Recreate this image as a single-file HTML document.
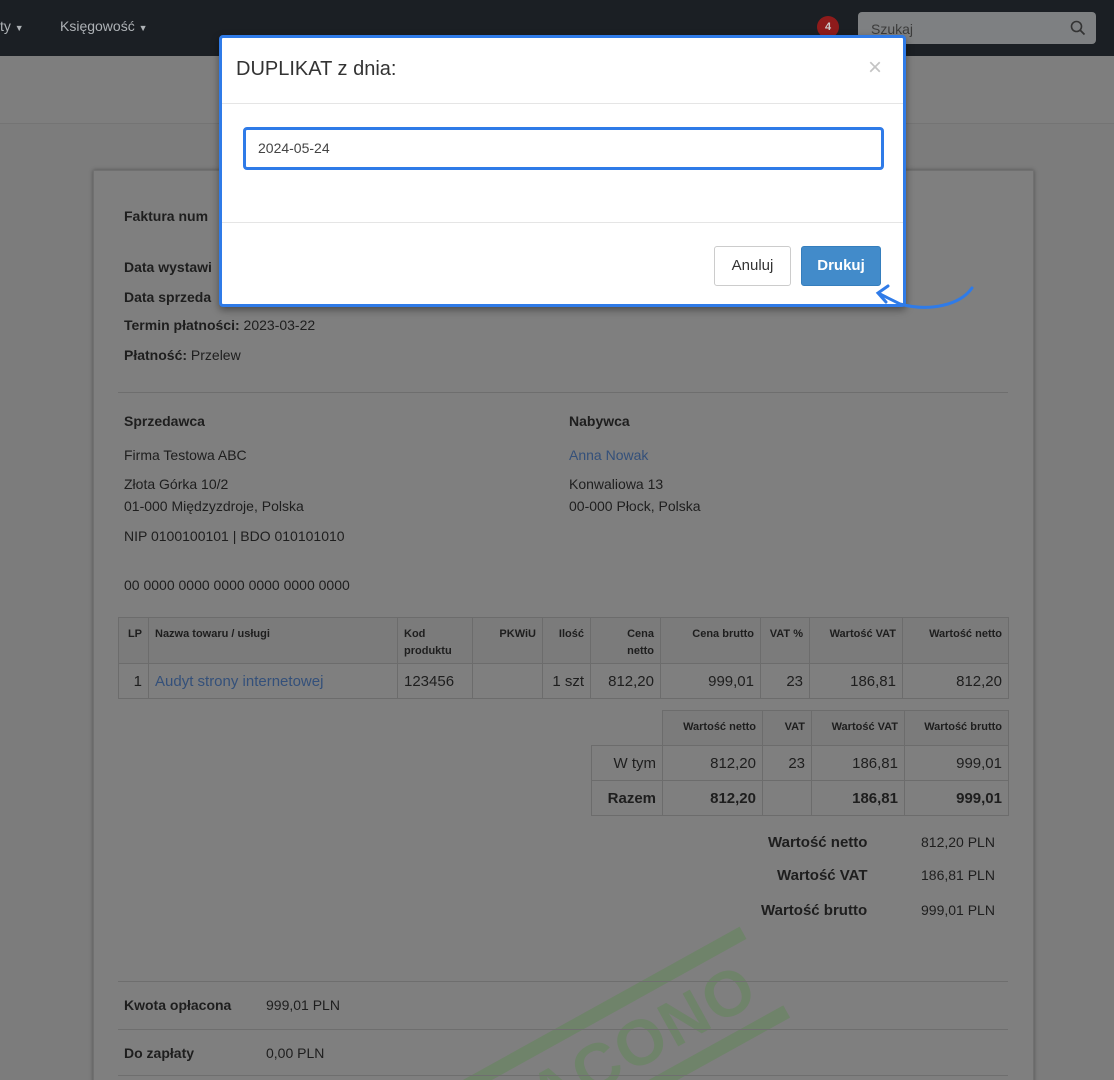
<!DOCTYPE html>
<html><head><meta charset="utf-8"><style>
*{box-sizing:border-box;margin:0;padding:0}
html,body{width:1114px;height:1080px;overflow:hidden}
body{background:#7c7c7c;font-family:"Liberation Sans",Arial,sans-serif;color:#1e1e1e;font-size:14px;position:relative}
.a{position:absolute;white-space:nowrap}
b{font-weight:bold}
.nav{position:absolute;left:0;top:0;width:1114px;height:56px;background:#1b1f24}
.sub{position:absolute;left:0;top:56px;width:1114px;height:68px;background:#7e7e7e;border-bottom:1px solid #747474}
.paper{position:absolute;left:93px;top:170px;width:941px;height:920px;background:#7f7f7f;box-shadow:0 0 4px rgba(0,0,0,.35);border:1px solid #707070}
table{border-collapse:collapse;position:absolute}
td,th{border:1px solid #6c6c6c;padding:0 6px;text-align:right}
th{font-size:11px;font-weight:bold;vertical-align:top;padding-top:8px;line-height:17px;background:#7b7b7b}
td{font-size:15px;height:35px}
.lk{color:#34507a}
.hr{position:absolute;height:1px;background:#6e6e6e}
.modal{position:absolute;left:219px;top:35px;width:687px;height:272px;background:#fff;border:3px solid #2f7be8;border-radius:4px;box-shadow:0 3px 8px rgba(0,0,0,.4)}
.clip{position:absolute;left:0;top:0;width:1114px;height:1080px;overflow:hidden}
.stamp{position:absolute;left:395px;top:990px;width:420px;height:130px;transform:rotate(-29deg);transform-origin:center}
</style></head><body>
<div class="nav"></div>
<div class="a" style="left:0;top:18px;color:#aeb2b6;font-size:14px">ty <span style="font-size:9px">▼</span></div>
<div class="a" style="left:60px;top:18px;color:#aeb2b6;font-size:14px">Księgowość <span style="font-size:9px">▼</span></div>
<div class="a" style="left:817px;top:16px;width:22px;height:22px;border-radius:11px;background:#8e1b1b;color:#ccc;font-size:11px;text-align:center;line-height:22px;font-weight:bold">4</div>
<div class="a" style="left:858px;top:12px;width:238px;height:32px;background:#7e8082;border-radius:4px;color:#3c3c3c;padding:9px 13px;font-size:14px">Szukaj
<svg style="position:absolute;right:10px;top:8px" width="16" height="16" viewBox="0 0 16 16"><circle cx="6.5" cy="6.5" r="5" fill="none" stroke="#333" stroke-width="1.6"/><path d="M10 10l4.5 4.5" stroke="#333" stroke-width="1.8"/></svg></div>
<div class="sub"></div>
<div class="clip">
<div class="paper"></div>

<div class="a" style="left:124px;top:208px"><b>Faktura num</b></div>
<div class="a" style="left:124px;top:259px"><b>Data wystawi</b></div>
<div class="a" style="left:124px;top:289px"><b>Data sprzeda</b></div>
<div class="a" style="left:124px;top:317px"><b>Termin płatności:</b> 2023-03-22</div>
<div class="a" style="left:124px;top:347px"><b>Płatność:</b> Przelew</div>
<div class="hr" style="left:118px;top:392px;width:890px"></div>
<div class="a" style="left:124px;top:413px"><b>Sprzedawca</b></div>
<div class="a" style="left:124px;top:447px">Firma Testowa ABC</div>
<div class="a" style="left:124px;top:476px">Złota Górka 10/2</div>
<div class="a" style="left:124px;top:498px">01-000 Międzyzdroje, Polska</div>
<div class="a" style="left:124px;top:528px">NIP 0100100101 | BDO 010101010</div>
<div class="a" style="left:124px;top:577px">00 0000 0000 0000 0000 0000 0000</div>
<div class="a" style="left:569px;top:413px"><b>Nabywca</b></div>
<div class="a lk" style="left:569px;top:447px">Anna Nowak</div>
<div class="a" style="left:569px;top:476px">Konwaliowa 13</div>
<div class="a" style="left:569px;top:498px">00-000 Płock, Polska</div>

<div class="stamp">
<div class="a" style="left:0;top:18px;width:390px;height:14px;background:#6f836a"></div>
<div class="a" style="left:40px;top:34px;font-size:64px;font-weight:bold;color:#6f836a;letter-spacing:2px">PŁACONO</div>
<div class="a" style="left:80px;top:108px;width:310px;height:14px;background:#6f836a"></div>
</div>

<table style="left:118px;top:617px;width:891px">
<tr style="height:46px"><th style="width:30px">LP</th><th style="text-align:left;width:249px">Nazwa towaru / usługi</th><th style="text-align:left;width:75px">Kod<br>produktu</th><th style="width:70px">PKWiU</th><th style="width:48px">Ilość</th><th style="width:70px">Cena<br>netto</th><th style="width:100px">Cena brutto</th><th style="width:49px">VAT %</th><th style="width:93px">Wartość VAT</th><th>Wartość netto</th></tr>
<tr><td>1</td><td style="text-align:left" class="lk">Audyt strony internetowej</td><td style="text-align:left">123456</td><td></td><td>1 szt</td><td>812,20</td><td>999,01</td><td>23</td><td>186,81</td><td>812,20</td></tr>
</table>
<table style="left:591px;top:710px;width:418px">
<tr style="height:31px"><td style="border:none;border-right:1px solid #6c6c6c;border-bottom:1px solid #6c6c6c;background:transparent;width:71px"></td><th style="width:100px">Wartość netto</th><th style="width:49px">VAT</th><th style="width:93px">Wartość VAT</th><th>Wartość brutto</th></tr>
<tr><td>W tym</td><td>812,20</td><td>23</td><td>186,81</td><td>999,01</td></tr>
<tr><td><b>Razem</b></td><td><b>812,20</b></td><td></td><td><b>186,81</b></td><td><b>999,01</b></td></tr>
</table>

<div class="a" style="left:768px;top:834px;font-size:15px"><b>Wartość netto</b></div><div class="a" style="left:921px;top:834px">812,20 PLN</div>
<div class="a" style="left:777px;top:867px;font-size:15px"><b>Wartość VAT</b></div><div class="a" style="left:921px;top:867px">186,81 PLN</div>
<div class="a" style="left:761px;top:902px;font-size:15px"><b>Wartość brutto</b></div><div class="a" style="left:921px;top:902px">999,01 PLN</div>

<div class="hr" style="left:118px;top:981px;width:890px"></div>
<div class="hr" style="left:118px;top:1029px;width:890px"></div>
<div class="hr" style="left:118px;top:1075px;width:890px"></div>
<div class="a" style="left:124px;top:997px"><b>Kwota opłacona</b></div><div class="a" style="left:266px;top:997px">999,01 PLN</div>
<div class="a" style="left:124px;top:1045px"><b>Do zapłaty</b></div><div class="a" style="left:266px;top:1045px">0,00 PLN</div>
</div>

<div class="modal">
<div class="a" style="left:14px;top:20px;font-size:20px;color:#333">DUPLIKAT z dnia:</div>
<div class="a" style="left:646px;top:16px;font-size:24px;color:#c4c4c4">×</div>
<div class="a" style="left:0;top:65px;width:681px;height:1px;background:#e5e5e5"></div>
<div class="a" style="left:21px;top:89px;width:641px;height:43px;border:3px solid #2f7be8;border-radius:4px;padding:10px 12px;font-size:14px;color:#444">2024-05-24</div>
<div class="a" style="left:0;top:184px;width:681px;height:1px;background:#e5e5e5"></div>
<div class="a" style="left:492px;top:208px;width:77px;height:40px;border:1px solid #ccc;border-radius:3px;font-size:15px;color:#333;text-align:center;line-height:38px">Anuluj</div>
<div class="a" style="left:579px;top:208px;width:80px;height:40px;background:#428bca;border:1px solid #357ebd;border-radius:3px;font-size:15px;color:#fff;font-weight:bold;text-align:center;line-height:38px">Drukuj</div>
</div>
<svg class="a" style="left:870px;top:280px" width="110" height="35" viewBox="0 0 110 35"><path d="M102 8 C90 25 60 32 30 24 L10 14" fill="none" stroke="#2f7be8" stroke-width="3" stroke-linecap="round"/><path d="M18 6 L8 13 L16 22" fill="none" stroke="#2f7be8" stroke-width="3" stroke-linecap="round"/></svg>
</body></html>
